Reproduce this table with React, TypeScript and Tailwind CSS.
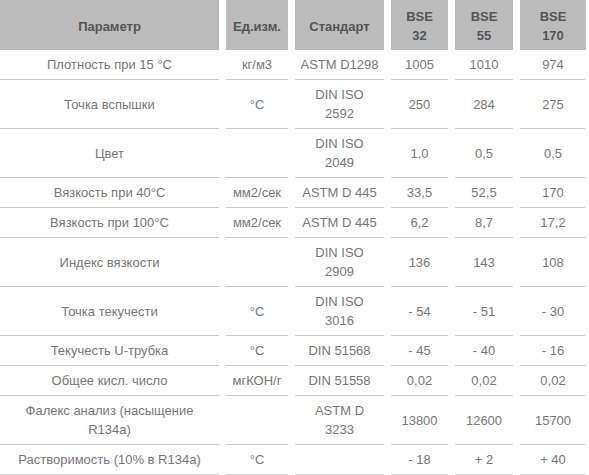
import React from "react";

const head = ["Параметр", "Ед.изм.", "Стандарт", "BSE 32", "BSE 55", "BSE 170"];

const rows: string[][] = [
  ["Плотность при 15 °C", "кг/м3", "ASTM D1298", "1005", "1010", "974"],
  ["Точка вспышки", "°C", "DIN ISO 2592", "250", "284", "275"],
  ["Цвет", "", "DIN ISO 2049", "1,0", "0,5", "0,5"],
  ["Вязкость при 40°C", "мм2/сек", "ASTM D 445", "33,5", "52,5", "170"],
  ["Вязкость при 100°C", "мм2/сек", "ASTM D 445", "6,2", "8,7", "17,2"],
  ["Индекс вязкости", "", "DIN ISO 2909", "136", "143", "108"],
  ["Точка текучести", "°C", "DIN ISO 3016", "- 54", "- 51", "- 30"],
  ["Текучесть U-трубка", "°C", "DIN 51568", "- 45", "- 40", "- 16"],
  ["Общее кисл. число", "мгКОН/г", "DIN 51558", "0,02", "0,02", "0,02"],
  ["Фалекс анализ (насыщение R134a)", "", "ASTM D 3233", "13800", "12600", "15700"],
  ["Растворимость (10% в R134a)", "°C", "", "- 18", "+ 2", "+ 40"],
];

const App = () => {
  return (
    <div className="w-[589px] h-[475px] overflow-hidden bg-white font-['Liberation_Sans',Arial,sans-serif] text-[13px] leading-[19px]">
      <div className="grid grid-cols-[219px_62px_89px_57px_58px_66px] gap-x-[7px]">
        {head.map((h) => (
          <div
            key={h}
            className="h-[50px] bg-[#bbbbbb] text-[#555] font-bold flex items-center justify-center text-center px-[6px] pt-[2px]"
          >
            {h.startsWith("BSE") ? (
              <span>
                BSE
                <br />
                {h.slice(4)}
              </span>
            ) : (
              h
            )}
          </div>
        ))}
        {rows.map((r, i) =>
          r.map((c, j) => (
            <div
              key={i + "-" + j}
              className="border-b border-[#cccccc] text-[#777] flex items-center justify-center text-center px-[5px] py-[5px]"
            >
              {c}
            </div>
          ))
        )}
      </div>
    </div>
  );
};

export default App;
